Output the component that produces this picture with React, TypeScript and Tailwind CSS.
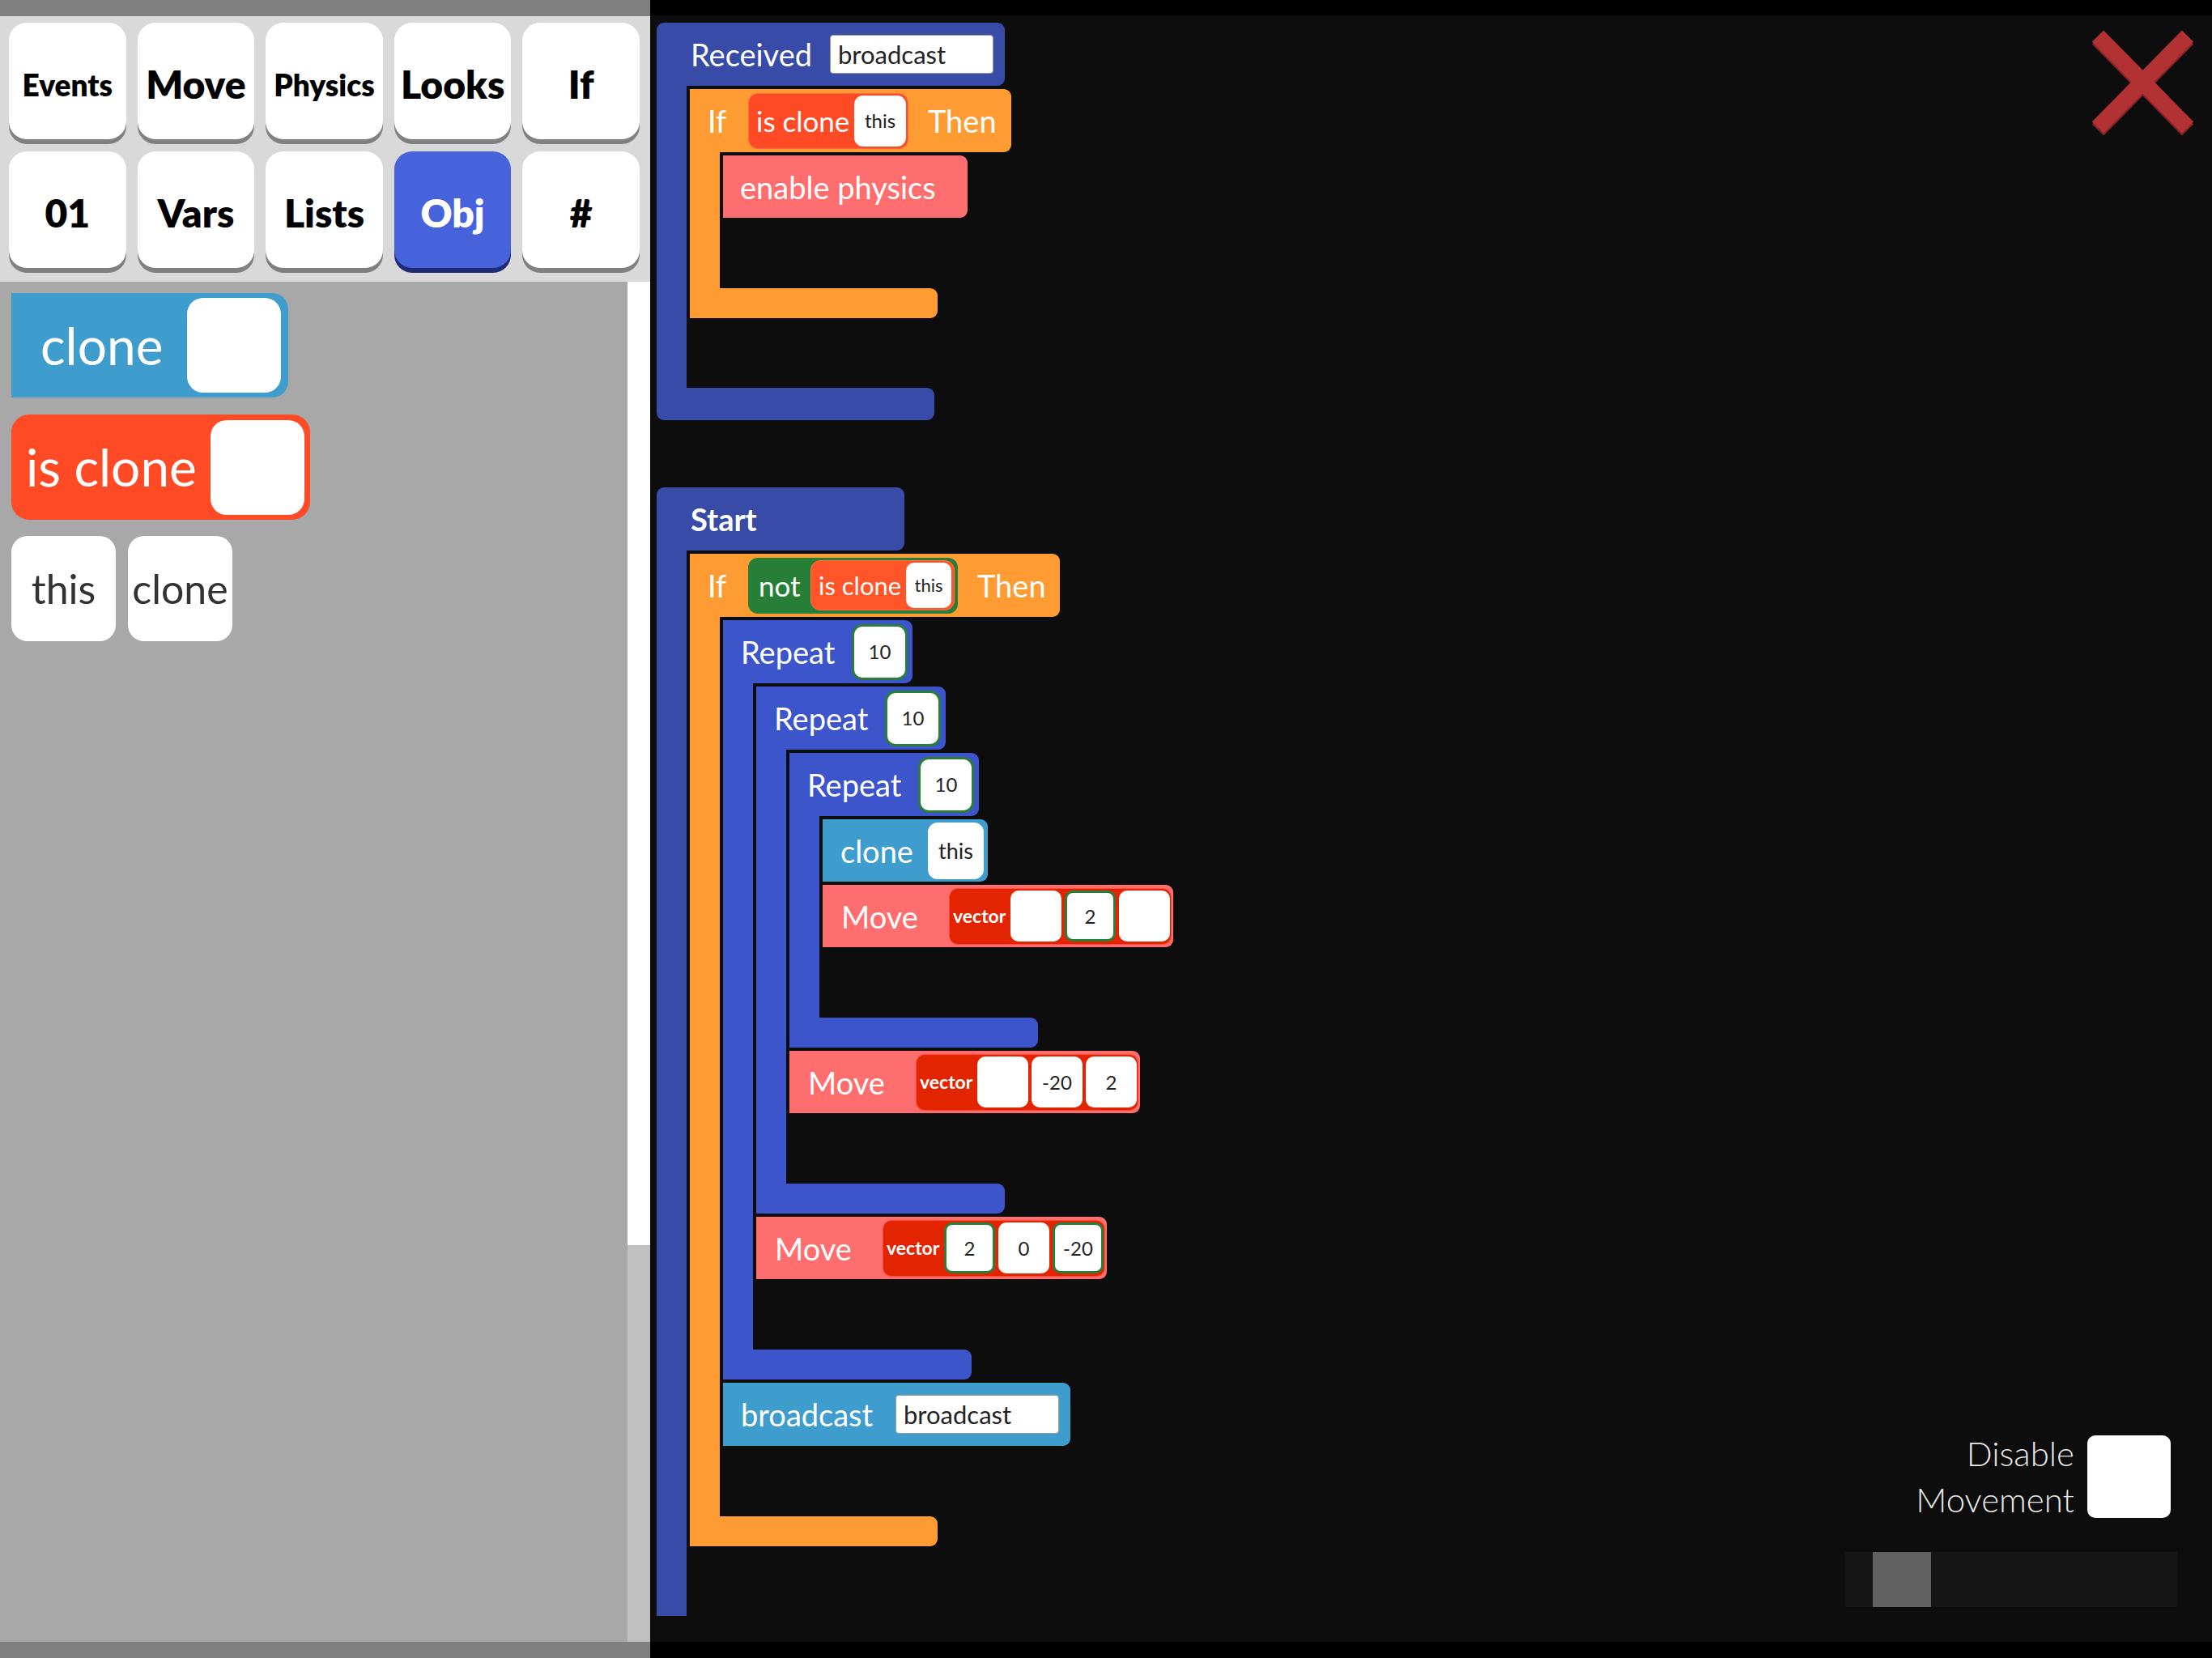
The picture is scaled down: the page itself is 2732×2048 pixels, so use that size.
import React from "react";

const cats = ["Events", "Move", "Physics", "Looks", "If", "01", "Vars", "Lists", "Obj", "#"];

const CatButton = ({ label }: { label: string }) => {
    const active = label === "Obj";
    const small = label === "Events" || label === "Physics";
    return <div className={`h-[144px] rounded-[22px] flex items-center justify-center pt-[8px] font-extrabold leading-none ${small ? "text-[37px]" : "text-[48px]"} ${active ? "bg-[#4763dc] text-white shadow-[0_6px_0_#1f2b70]" : "bg-white text-black shadow-[0_6px_0_#808080]"}`}>
        {label}
    </div>
}

const Slot = ({ text, green, className }: { text?: string, green?: boolean, className: string }) => (
    <div className={`bg-white flex items-center justify-center text-[#222] leading-none shrink-0 ${green ? "border-[3px] border-[#2a7e38]" : ""} ${className}`}>
        {text}
    </div>
)

const Input = () => (
    <div className="h-[48px] w-[202px] bg-white border border-[#9a9a9a] rounded-[4px] flex items-center pl-[9px] text-[31px] text-[#222] leading-none shrink-0">broadcast</div>
)

const CBlock = ({ color, header, children, bottom, pb }: { color: string, header: React.ReactNode, children: React.ReactNode, bottom: string, pb: string }) => (
    <div className="flex flex-col items-start">
        {header}
        <div className="flex">
            <div className={`w-[37px] shrink-0 ${color}`} />
            <div className={`flex flex-col items-start gap-[4px] pt-[4px] pl-[4px] ${pb}`}>{children}</div>
        </div>
        <div className={`${color} ${bottom}`} />
    </div>
)

const IsClone = ({ small }: { small?: boolean }) => small
    ? <div className="h-[62px] w-[178px] rounded-[12px] bg-[#ff5529] border border-[#ff7045] flex items-center pl-[9px] pr-[3px]">
        <span className="flex-1 text-[31px] whitespace-nowrap">is clone</span>
        <Slot text="this" className="w-[56px] h-[56px] rounded-[10px] text-[22px]" />
    </div>
    : <div className="h-[69px] w-[198px] rounded-[12px] bg-[#ff4a26] border border-[#ff6a45] flex items-center pl-[9px] pr-[2px]">
        <span className="flex-1 text-[35px] whitespace-nowrap">is clone</span>
        <Slot text="this" className="w-[64px] h-[63px] rounded-[11px] text-[24px]" />
    </div>

const IfHeader = ({ w, children }: { w: string, children: React.ReactNode }) => (
    <div className={`h-[78px] bg-[#ff9b33] rounded-r-[9px] flex items-center pl-[22px] text-[38px] leading-none ${w}`}>
        <span className="w-[50px] shrink-0">If</span>
        {children}
        <span className="pl-[24px]">Then</span>
    </div>
)

const RepeatHeader = () => (
    <div className="h-[78px] w-[234px] bg-[#3c55cb] rounded-r-[9px] flex items-center pl-[22px] pr-[6px] text-[38px] leading-none">
        <span className="w-[137px] shrink-0">Repeat</span>
        <Slot text="10" green className="w-[69px] h-[69px] rounded-[13px] text-[24px]" />
    </div>
)

const Repeat = ({ children }: { children: React.ReactNode }) => (
    <CBlock color="bg-[#3c55cb]" header={<RepeatHeader />} bottom="h-[37px] w-[307px] rounded-r-[9px]" pb="pb-[87px]">
        {children}
    </CBlock>
)

const Move = ({ vals }: { vals: { t?: string, g?: boolean }[] }) => (
    <div className="h-[77px] w-[433px] bg-[#ff6e6e] rounded-r-[9px] flex items-center pl-[23px] pr-[2px] text-[38px] leading-none">
        <span className="w-[133px] shrink-0">Move</span>
        <div className="h-[70px] w-[275px] rounded-[11px] bg-[#e32400] border border-[#ff4a3a] flex items-center gap-[4px] pl-[4px] pr-[3px]">
            <span className="w-[67px] shrink-0 font-bold text-[23px]">vector</span>
            {vals.map((v, i) => <Slot key={i} text={v.t} green={v.g} className="w-[63px] h-[63px] rounded-[10px] text-[24px]" />)}
        </div>
    </div>
)

const CloneBlock = () => (
    <div className="h-[77px] w-[204px] bg-[#3f9dcd] rounded-r-[9px] flex items-center pl-[22px] text-[38px] leading-none">
        <span className="w-[108px] shrink-0">clone</span>
        <Slot text="this" className="w-[69px] h-[70px] rounded-[12px] text-[27px]" />
    </div>
)

const CloseIcon = () => (
    <svg width="125" height="131" viewBox="0 0 125 131">
        <line x1="7" y1="10.5" x2="118" y2="123.5" stroke="#86232a" strokeWidth="20" />
        <line x1="118" y1="10.5" x2="7" y2="123.5" stroke="#86232a" strokeWidth="20" />
        <line x1="7" y1="7.5" x2="118" y2="120.5" stroke="#b23234" strokeWidth="20" />
        <line x1="118" y1="7.5" x2="7" y2="120.5" stroke="#b23234" strokeWidth="20" />
    </svg>
)

export default function App() {
    return <div className="w-[2732px] h-[2048px] flex overflow-hidden font-['Lato','Noto_Sans',sans-serif] text-white">
        {/* palette side */}
        <div className="w-[803px] shrink-0 flex flex-col">
            <div className="h-[20px] bg-[#808080]" />
            <div className="h-[328px] bg-[#d9d9d9] grid grid-cols-5 gap-x-[14px] gap-y-[15px] pt-[8px] pl-[11px] pr-[13px] content-start">
                {cats.map(c => <CatButton key={c} label={c} />)}
            </div>
            <div className="flex-1 flex">
                <div className="flex-1 bg-[#a8a8a8] flex flex-col items-start pl-[14px] pt-[14px]">
                    <div className="h-[129px] w-[342px] bg-[#3f9dcd] rounded-r-[20px] flex items-center pl-[36px] pr-[9px] text-[64px] leading-none">
                        <span className="flex-1">clone</span>
                        <Slot className="w-[116px] h-[117px] rounded-[20px]" />
                    </div>
                    <div className="mt-[21px] h-[130px] w-[369px] bg-[#ff4a26] rounded-[22px] flex items-center pl-[18px] pr-[7px] text-[64px] leading-none">
                        <span className="flex-1 whitespace-nowrap">is clone</span>
                        <Slot className="w-[116px] h-[117px] rounded-[20px]" />
                    </div>
                    <div className="mt-[20px] flex gap-[15px]">
                        <Slot text="this" className="w-[129px] h-[130px] rounded-[20px] text-[50px] text-[#333]" />
                        <Slot text="clone" className="w-[129px] h-[130px] rounded-[20px] text-[50px] text-[#333]" />
                    </div>
                </div>
                <div className="w-[28px] flex flex-col">
                    <div className="h-[1190px] bg-white" />
                    <div className="flex-1 bg-[#c0c0c0]" />
                </div>
            </div>
            <div className="h-[20px] bg-[#808080]" />
        </div>

        {/* code side */}
        <div className="flex-1 flex flex-col bg-black">
            <div className="h-[19px]" />
            <div className="flex-1 bg-[#0d0d0d] relative">
                <div className="h-[1977px] overflow-hidden pl-[8px] pt-[9px] flex flex-col items-start gap-[83px]">
                    <CBlock color="bg-[#374ba7]" bottom="h-[40px] w-[343px] rounded-r-[9px] rounded-bl-[9px]" pb="pb-[86px]"
                        header={<div className="h-[78px] w-[430px] bg-[#374ba7] rounded-t-[9px] rounded-br-[9px] flex items-center pl-[42px] text-[38px] leading-none">
                            <span className="w-[172px] shrink-0">Received</span>
                            <Input />
                        </div>}>
                        <CBlock color="bg-[#ff9b33]" bottom="h-[37px] w-[306px] rounded-r-[9px]" pb="pb-[87px]"
                            header={<IfHeader w="w-[397px]"><IsClone /></IfHeader>}>
                            <div className="h-[77px] w-[302px] bg-[#ff6e6e] rounded-r-[9px] flex items-center pl-[21px] text-[38px] leading-none">enable physics</div>
                        </CBlock>
                    </CBlock>

                    <CBlock color="bg-[#374ba7]" bottom="h-[40px] w-[343px] rounded-r-[9px] rounded-bl-[9px]" pb="pb-[86px]"
                        header={<div className="h-[78px] w-[306px] bg-[#374ba7] rounded-t-[9px] rounded-br-[9px] flex items-center pl-[42px] text-[38px] font-bold leading-none">Start</div>}>
                        <CBlock color="bg-[#ff9b33]" bottom="h-[37px] w-[306px] rounded-r-[9px]" pb="pb-[87px]"
                            header={<IfHeader w="w-[457px]">
                                <div className="h-[69px] w-[259px] rounded-[12px] bg-[#277e36] flex items-center pl-[13px] pr-[4px]">
                                    <span className="w-[64px] shrink-0 text-[35px]">not</span>
                                    <IsClone small />
                                </div>
                            </IfHeader>}>
                            <Repeat>
                                <Repeat>
                                    <Repeat>
                                        <CloneBlock />
                                        <Move vals={[{}, { t: "2", g: true }, {}]} />
                                    </Repeat>
                                    <Move vals={[{}, { t: "-20" }, { t: "2" }]} />
                                </Repeat>
                                <Move vals={[{ t: "2", g: true }, { t: "0" }, { t: "-20", g: true }]} />
                            </Repeat>
                            <div className="h-[78px] w-[429px] bg-[#3f9dcd] rounded-r-[9px] flex items-center pl-[22px] text-[38px] leading-none">
                                <span className="w-[191px] shrink-0">broadcast</span>
                                <Input />
                            </div>
                        </CBlock>
                    </CBlock>
                </div>

                <div className="absolute top-[18px] right-[23px]">
                    <CloseIcon />
                </div>

                <div className="absolute right-[43px] bottom-[43px] flex flex-col items-end gap-[36px]">
                    <div className="flex items-center gap-[16px] mr-[8px]">
                        <div className="text-right text-[42px] font-light leading-[57px] text-[#e8e8e8]">Disable<br />Movement</div>
                        <div className="w-[103px] h-[102px] bg-white rounded-[10px]" />
                    </div>
                    <div className="w-[410px] h-[68px] bg-[#161616] flex">
                        <div className="ml-[34px] w-[72px] h-full bg-[#606060]" />
                    </div>
                </div>
            </div>
            <div className="h-[20px]" />
        </div>
    </div>
}
